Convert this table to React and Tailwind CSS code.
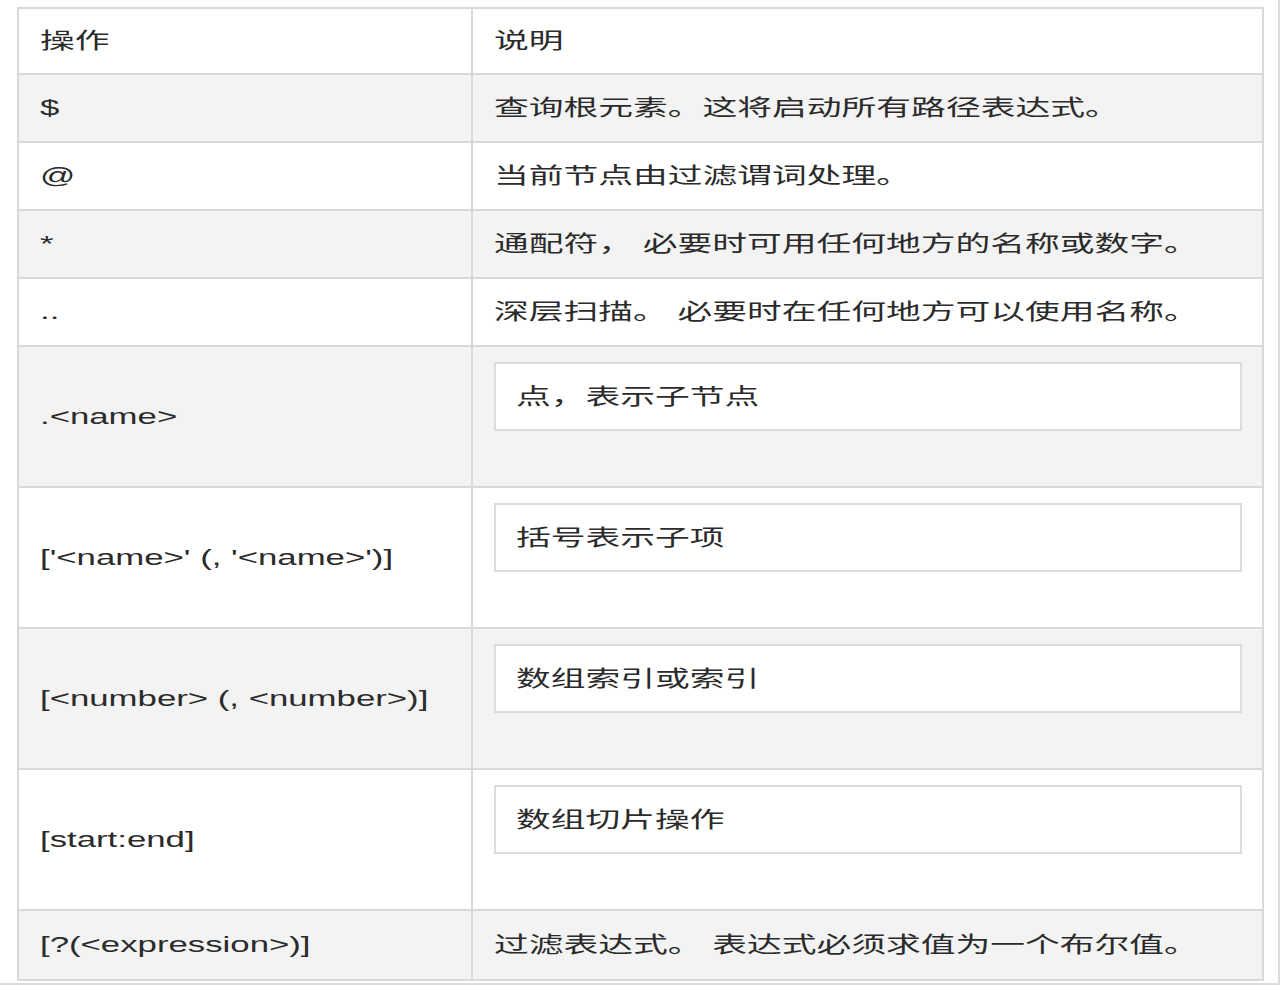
import React from 'react'

const rows = [
  { op: '$', desc: '查询根元素。这将启动所有路径表达式。' },
  { op: '@', desc: '当前节点由过滤谓词处理。' },
  { op: '*', desc: '通配符， 必要时可用任何地方的名称或数字。' },
  { op: '..', desc: '深层扫描。 必要时在任何地方可以使用名称。' },
  { op: '.<name>', desc: '点，表示子节点', box: true },
  { op: "['<name>' (, '<name>')]", desc: '括号表示子项', box: true },
  { op: '[<number> (, <number>)]', desc: '数组索引或索引', box: true },
  { op: '[start:end]', desc: '数组切片操作', box: true },
  { op: '[?(<expression>)]', desc: '过滤表达式。 表达式必须求值为一个布尔值。' },
]

// the shot is stretched sideways, so glyphs get widened the same way
function T({ children }) {
  return <span className="inline-block origin-left scale-x-[1.58] whitespace-nowrap">{children}</span>
}

export default function App() {
  return (
    <div className="w-[1280px] h-[985px] bg-white border-r-2 border-b-2 border-[#dcdcdc] pt-[7px] pl-[17px] text-[22px] leading-none text-[#2b2b2b]"
         style={{ fontFamily: '"Liberation Sans", "Noto Sans CJK SC", sans-serif' }}>
      <div className="w-[1247px] border-2 border-[#d9d9d9]">
        <div className="flex h-[66px] border-b-2 border-[#d9d9d9] bg-white">
          <div className="w-[454px] border-r-2 border-[#d9d9d9] pl-[21px] flex items-center"><T>操作</T></div>
          <div className="flex-1 pl-[21px] flex items-center"><T>说明</T></div>
        </div>
        {rows.map((r, i) => (
          <div key={i}
               className={`flex ${r.box ? 'h-[141px]' : 'h-[68px]'} ${i < rows.length - 1 ? 'border-b-2' : ''} border-[#d9d9d9] ${i % 2 === 0 ? 'bg-[#f3f3f3]' : 'bg-white'}`}>
            <div className="w-[454px] border-r-2 border-[#d9d9d9] pl-[21px] flex items-center"><T>{r.op}</T></div>
            {r.box ? (
              <div className="flex-1 pt-[15px] pl-[21px] pr-[20px]">
                <div className="h-[69px] border-2 border-[#dcdcdc] bg-white pl-[20px] flex items-center"><T>{r.desc}</T></div>
              </div>
            ) : (
              <div className="flex-1 pl-[21px] flex items-center"><T>{r.desc}</T></div>
            )}
          </div>
        ))}
      </div>
    </div>
  )
}
